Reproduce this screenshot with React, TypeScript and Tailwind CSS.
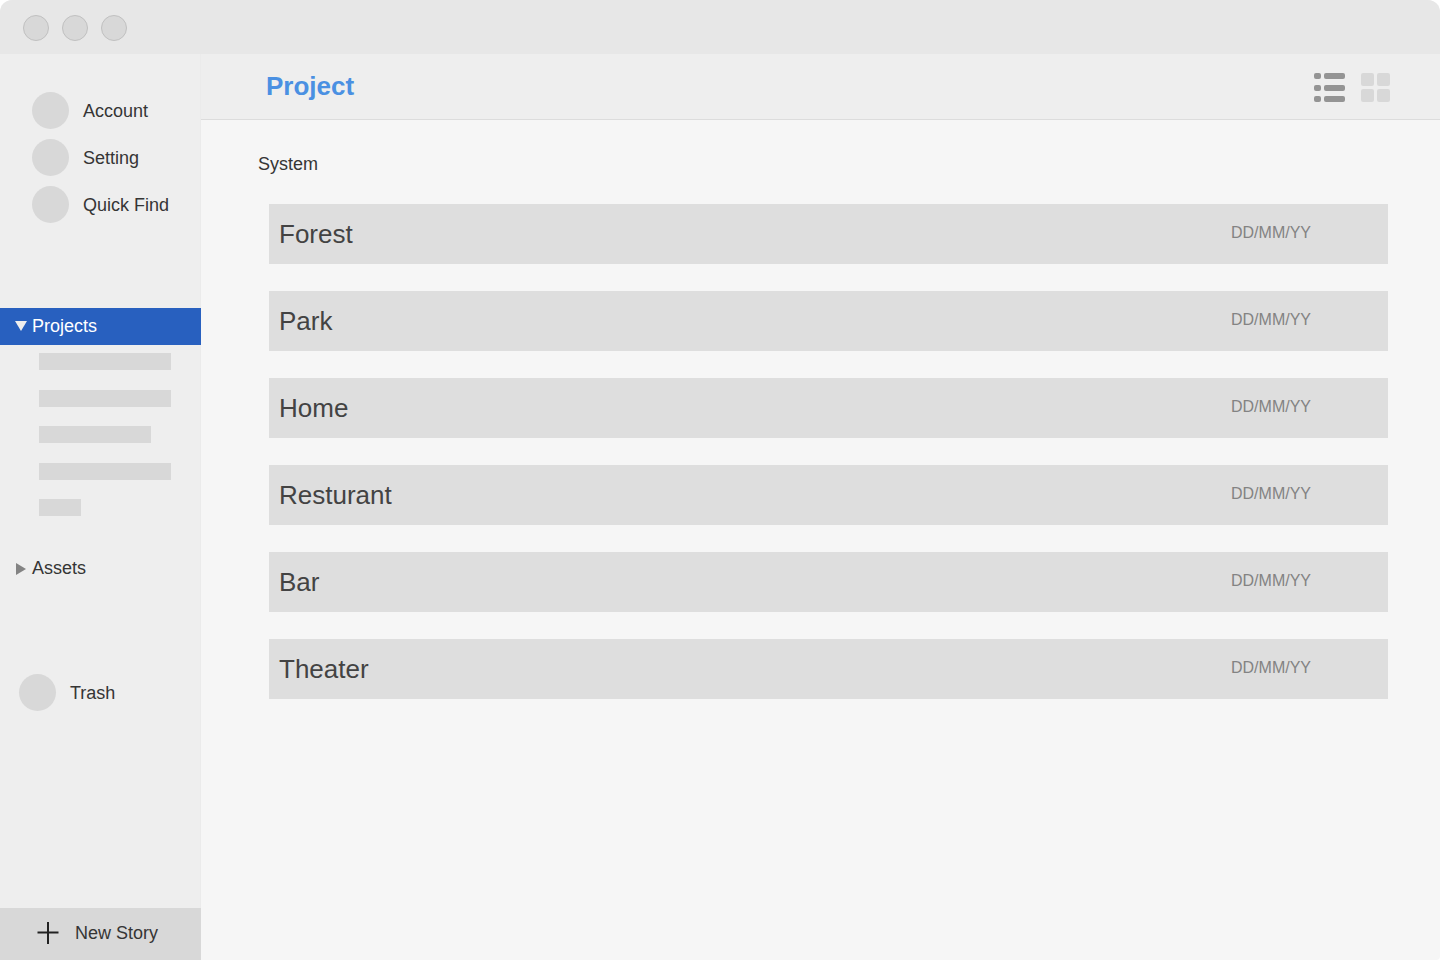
import React, { useState } from "react";

const shortcuts = ["Account", "Setting", "Quick Find"];
const projectBars = ["w-[132px]", "w-[132px]", "w-28", "w-[132px]", "w-[42px]"];
const projects = ["Forest", "Park", "Home", "Resturant", "Bar", "Theater"];

function Dot() {
  return <span className="size-[37px] shrink-0 rounded-full bg-[#d8d8d8]" />;
}

function WindowBar() {
  return (
    <div className="flex h-[54px] shrink-0 items-center gap-[13px] bg-[#e7e7e7] px-[23px] pt-0.5">
      {["Close", "Minimize", "Zoom"].map((name) => (
        <button
          key={name}
          type="button"
          aria-label={name}
          className="size-[26px] rounded-full border border-[#c0c0c0] bg-[#d8d8d8]"
        />
      ))}
    </div>
  );
}

function Sidebar() {
  return (
    <aside className="flex w-[201px] shrink-0 flex-col border-r border-[#ebebeb] bg-[#eeeeee]">
      <nav className="flex flex-col pt-[38px]">
        <ul className="flex flex-col gap-2.5 pl-8">
          {shortcuts.map((name) => (
            <li key={name}>
              <a href="#" className="flex items-center gap-3.5">
                <Dot />
                {name}
              </a>
            </li>
          ))}
        </ul>
        <button
          type="button"
          aria-expanded="true"
          className="-mr-px mt-[85px] flex h-[37px] items-center gap-[5px] bg-[#2860bf] pb-0.5 pl-[15px] text-left text-white"
        >
          <svg className="h-[10px] w-3" viewBox="0 0 12 10" aria-hidden="true">
            <path d="M0 0H12L6 10Z" fill="#eeeeee" />
          </svg>
          Projects
        </button>
        <ul className="mt-2 flex h-[163px] flex-col justify-between pl-[39px]">
          {projectBars.map((width, i) => (
            <li key={i} className={`h-[17px] bg-[#d8d8d8] ${width}`} />
          ))}
        </ul>
        <button
          type="button"
          aria-expanded="false"
          className="mt-[34px] flex h-9 items-center gap-[5px] pl-[15px] text-left"
        >
          <svg className="h-[14px] w-3" viewBox="0 0 12 14" aria-hidden="true">
            <path d="M1 2V14L11 8Z" fill="#838383" />
          </svg>
          Assets
        </button>
        <a href="#" className="mt-[88px] flex items-center gap-3.5 pl-[19px]">
          <Dot />
          Trash
        </a>
      </nav>
      <button
        type="button"
        className="-mr-px mt-auto flex h-[52px] items-center gap-4 bg-[#d8d8d8] pb-0.5 pl-[37px] text-left"
      >
        <svg className="size-[22px]" viewBox="0 0 22 22" aria-hidden="true">
          <path d="M11 1V21M1.5 10.5H20.5" stroke="#222222" strokeWidth="2" strokeLinecap="square" />
        </svg>
        New Story
      </button>
    </aside>
  );
}

function ListIcon() {
  return (
    <svg className="h-[29px] w-[31px]" viewBox="0 0 31 29" aria-hidden="true" fill="currentColor">
      {[0, 12, 23].map((y) => (
        <g key={y}>
          <rect y={y} width="7" height="6" rx="2" />
          <rect x="10" y={y} width="21" height="6" rx="2" />
        </g>
      ))}
    </svg>
  );
}

function GridIcon() {
  return (
    <svg className="size-[29px]" viewBox="0 0 29 29" aria-hidden="true" fill="currentColor">
      <rect width="13" height="13" rx="2" />
      <rect x="16" width="13" height="13" rx="2" />
      <rect y="16" width="13" height="13" rx="2" />
      <rect x="16" y="16" width="13" height="13" rx="2" />
    </svg>
  );
}

export default function App() {
  const [view, setView] = useState<"list" | "grid">("list");
  const tone = (active: boolean) => (active ? "text-[#949494]" : "text-[#d8d8d8]");

  return (
    <div className="flex min-h-screen flex-col overflow-hidden rounded-t-xl rounded-br bg-[#f6f6f6] font-['Liberation_Sans',Arial,sans-serif] text-lg leading-6 text-[#353535]">
      <WindowBar />
      <div className="flex grow">
        <Sidebar />
        <main className="flex min-w-0 grow flex-col">
          <header className="flex h-[66px] items-center justify-between border-b border-[#dcdcdc] bg-[#eeeeee] pl-[65px] pr-[50px]">
            <h1 className="pb-0.5 text-[26px] font-bold leading-8 text-[#4a90e2]">Project</h1>
            <div className="flex gap-4 pt-0.5">
              <button
                type="button"
                aria-label="List view"
                aria-pressed={view === "list"}
                onClick={() => setView("list")}
                className={tone(view === "list")}
              >
                <ListIcon />
              </button>
              <button
                type="button"
                aria-label="Grid view"
                aria-pressed={view === "grid"}
                onClick={() => setView("grid")}
                className={tone(view === "grid")}
              >
                <GridIcon />
              </button>
            </div>
          </header>
          <section className="pl-[57px] pr-[52px] pt-8">
            <h2>System</h2>
            <ul
              className={
                view === "list"
                  ? "mt-7 flex flex-col gap-[27px] pl-[11px]"
                  : "mt-7 grid grid-cols-2 gap-[27px] pl-[11px]"
              }
            >
              {projects.map((name) => (
                <li key={name}>
                  <a
                    href="#"
                    className="flex h-[60px] items-center justify-between bg-[#dedede] pl-2.5 pr-[77px]"
                  >
                    <span className="text-[26px] leading-8 text-[#434343]">{name}</span>
                    <span className="pb-0.5 text-base text-[#838383]">DD/MM/YY</span>
                  </a>
                </li>
              ))}
            </ul>
          </section>
        </main>
      </div>
    </div>
  );
}
